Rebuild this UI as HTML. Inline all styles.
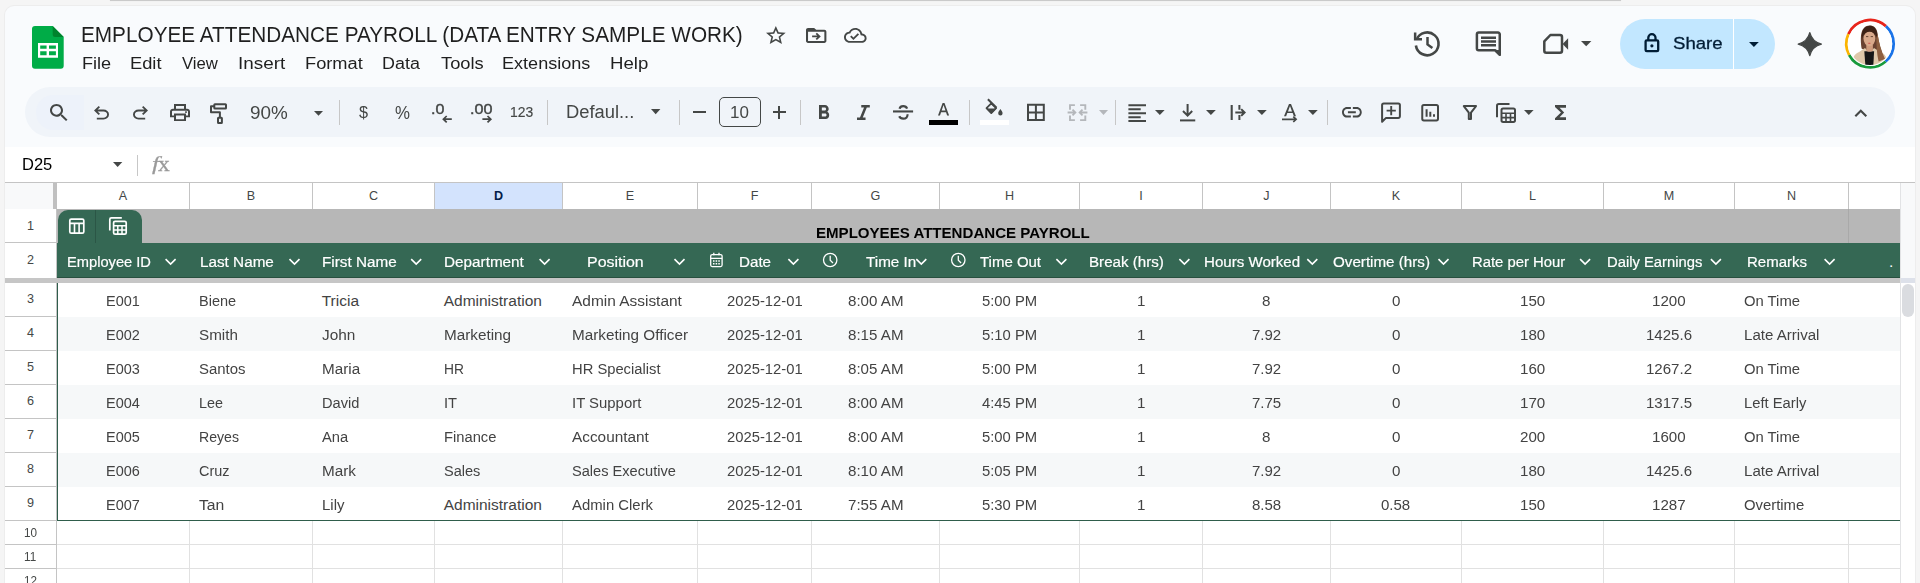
<!DOCTYPE html>
<html lang="en"><head><meta charset="utf-8"><title>EMPLOYEE ATTENDANCE PAYROLL (DATA ENTRY SAMPLE WORK) - Google Sheets</title>
<style>
html,body{margin:0;padding:0}
body{width:1920px;height:583px;overflow:hidden;position:relative;background:#f5f5f5;font-family:'Liberation Sans', sans-serif;}
body div, body svg, body span.t, body section, body header, body nav, body main{position:absolute}
span.t{white-space:nowrap;transform-origin:0 50%;display:block}
svg{overflow:visible;display:block}
</style></head>
<body>
<div style="left:110px;top:0;width:1511px;height:1px;background:#cacaca;box-shadow:0 0 1px #d8d8d8"></div>
<div id="app" style="left:5px;top:6px;width:1910px;height:600px;background:#f9fbfd;border-radius:9px 9px 0 0;box-shadow:0 0 0 1px #ededed"></div>
<header id="docs-titlebar" class="layer">
<svg style="left:31px;top:25px;" width="34" height="45" viewBox="31 25 34 45">
<path d="M35 26 h17.7 l11 11 v28.7 a3 3 0 0 1 -3 3 h-25.7 a3 3 0 0 1 -3 -3 v-36.7 a3 3 0 0 1 3 -3z" fill="#00ac47"/>
<path d="M52.7 26 l11 11 h-8.5 a2.5 2.5 0 0 1 -2.5 -2.5z" fill="#00832d"/>
<path d="M38 43 h20 v14.8 h-20z M40.2 45.4 v3.4 h6.4 v-3.4z M49 45.4 v3.4 h6.9 v-3.4z M40.2 51.2 v4.1 h6.4 v-4.1z M49 51.2 v4.1 h6.9 v-4.1z" fill="#fff" fill-rule="evenodd"/>
</svg>
<span class="t" style="left:80.84px;top:22px;font-size:22.3px;line-height:25px;color:#1f1f1f;transform:scaleX(0.9305);">EMPLOYEE ATTENDANCE PAYROLL (DATA ENTRY SAMPLE WORK)</span>
<svg style="left:765.6px;top:26px;" width="19.7" height="18" viewBox="2 2 20 19" preserveAspectRatio="none"><path fill="#444746" d="M22 9.24l-7.19-.62L12 2 9.19 8.63 2 9.24l5.46 4.73L5.82 21 12 17.27 18.18 21l-1.63-7.03L22 9.24zM12 15.4l-3.76 2.27 1-4.28-3.32-2.88 4.38-.38L12 6.1l1.71 4.04 4.38.38-3.32 2.88 1 4.28L12 15.4z"/></svg>
<svg style="left:805.6px;top:27.9px;" width="20.4" height="14.9" viewBox="2 4 20 16" preserveAspectRatio="none"><path fill="#444746" d="M20 6h-8l-2-2H4c-1.1 0-2 .9-2 2v12c0 1.1.9 2 2 2h16c1.1 0 2-.9 2-2V8c0-1.1-.9-2-2-2zm0 12H4V8h16v10zm-7.3-1.2l3.8-3.8-3.8-3.8-1.25 1.25 1.65 1.65H8v1.8h5.1l-1.65 1.65z"/></svg>
<svg style="left:844.4px;top:27.5px;" width="22.6" height="14.8" viewBox="0 4 24 16" preserveAspectRatio="none"><path fill="#444746" d="M19.35 10.04C18.67 6.59 15.64 4 12 4 9.11 4 6.6 5.64 5.35 8.04 2.34 8.36 0 10.91 0 14c0 3.31 2.69 6 6 6h13c2.76 0 5-2.24 5-5 0-2.64-2.05-4.78-4.65-4.96zM19 18H6c-2.21 0-4-1.79-4-4 0-2.05 1.53-3.76 3.56-3.97l1.07-.11.5-.95C8.08 7.14 9.94 6 12 6c2.62 0 4.88 1.86 5.39 4.43l.3 1.5 1.53.11c1.56.1 2.78 1.41 2.78 2.96 0 1.65-1.35 3-3 3zm-9-3.82l-2.09-2.09L6.5 13.5 10 17l6.01-6.01-1.41-1.41z"/></svg>
<nav id="docs-menubar" class="layer">
<span class="t" style="left:81.55px;top:53px;font-size:17.3px;line-height:20px;color:#1f1f1f;transform:scaleX(1.0480);">File</span>
<span class="t" style="left:129.54px;top:53px;font-size:17.3px;line-height:20px;color:#1f1f1f;transform:scaleX(1.0583);">Edit</span>
<span class="t" style="left:182px;top:53px;font-size:17.3px;line-height:20px;color:#1f1f1f;transform:scaleX(0.9676);">View</span>
<span class="t" style="left:238.05px;top:53px;font-size:17.3px;line-height:20px;color:#1f1f1f;transform:scaleX(1.0930);">Insert</span>
<span class="t" style="left:305.04px;top:53px;font-size:17.3px;line-height:20px;color:#1f1f1f;transform:scaleX(1.0553);">Format</span>
<span class="t" style="left:382.31px;top:53px;font-size:17.3px;line-height:20px;color:#1f1f1f;transform:scaleX(1.0370);">Data</span>
<span class="t" style="left:440.88px;top:53px;font-size:17.3px;line-height:20px;color:#1f1f1f;transform:scaleX(1.0599);">Tools</span>
<span class="t" style="left:502.3px;top:53px;font-size:17.3px;line-height:20px;color:#1f1f1f;transform:scaleX(1.0447);">Extensions</span>
<span class="t" style="left:609.51px;top:53px;font-size:17.3px;line-height:20px;color:#1f1f1f;transform:scaleX(1.0762);">Help</span>
</nav>
<svg style="left:1410px;top:28px;" width="32" height="32" viewBox="1410 28 32 32">
<path d="M1416.6 39.6 A11.4 11.4 0 1 1 1415.9 45.5" fill="none" stroke="#444746" stroke-width="2.6"/>
<path d="M1413.9 32.6 h2.5 v5.4 h5.6 v2.5 h-8.1z" fill="#444746"/>
<path d="M1427.500 37 v7.400 l4.900 3.600" fill="none" stroke="#444746" stroke-width="2.5"/>
</svg>
<svg style="left:1474px;top:30px;" width="30" height="28" viewBox="1474 30 30 28">
<path d="M1478.6 32.5 h19.4 a1.75 1.75 0 0 1 1.75 1.75 v20.6 l-4.6 -4.6 h-16.5 a1.75 1.75 0 0 1 -1.75 -1.75 v-14.25 a1.75 1.75 0 0 1 1.75 -1.75z" fill="none" stroke="#444746" stroke-width="2.5" stroke-linejoin="round"/>
<path d="M1495.2 50 l5.8 0 v6z" fill="#444746"/>
<path d="M1481 36.4h15v2.5h-15z M1481 40.2h15v2.5h-15z M1481 44h15v2.5h-15z" fill="#444746"/>
</svg>
<svg style="left:1541px;top:32px;" width="30" height="24" viewBox="1541 32 30 24">
<path d="M1550.4 35 h9.6 a2 2 0 0 1 2 2 v13.8 a2 2 0 0 1 -2 2 h-13.7 a2 2 0 0 1 -2 -2 v-9.4z" fill="none" stroke="#444746" stroke-width="2.5" stroke-linejoin="round"/>
<path d="M1562.6 43.9 l5.5 -5.6 v11.4z" fill="#444746"/>
</svg>
<svg style="left:1580.6px;top:40.8px;" width="10.4" height="5.2" viewBox="7 10 10 5" preserveAspectRatio="none"><path fill="#444746" d="M7 10l5 5 5-5z"/></svg>
<div id="share" style="left:1620px;top:19px;width:155px;height:50px;border-radius:25px;background:#c2e7ff"></div>
<div style="left:1733px;top:19px;width:1.3px;height:50px;background:#fff;"></div>
<svg style="left:1642px;top:31px;" width="20" height="23" viewBox="1642 31 20 23">
<rect x="1645.6" y="40.3" width="12.6" height="10.9" rx="1.2" fill="none" stroke="#001d35" stroke-width="2.3"/>
<path d="M1648.3 40.300 v-2.500 a3.600 3.600 0 0 1 7.200 0 v2.500" fill="none" stroke="#001d35" stroke-width="2.3"/>
<circle cx="1651.900" cy="45.800" r="1.600" fill="#001d35"/>
</svg>
<span class="t" style="left:1673.16px;top:34px;font-size:16.8px;line-height:19px;color:#001d35;transform:scaleX(1.1077);-webkit-text-stroke:0.3px #001d35;">Share</span>
<svg style="left:1749px;top:42px;" width="9.8" height="5" viewBox="7 10 10 5" preserveAspectRatio="none"><path fill="#001d35" d="M7 10l5 5 5-5z"/></svg>
<svg style="left:1796px;top:31px;" width="28" height="27" viewBox="1796 31 28 27"><path d="M1809.8 32.700 C1811.300 38.700 1815.300 42.600 1821.400 44.100 C1815.300 45.600 1811.300 49.500 1809.800 55.600 C1808.300 49.500 1804.300 45.600 1798.200 44.100 C1804.300 42.600 1808.300 38.700 1809.800 32.700z" fill="#444746" stroke="#444746" stroke-width="1.300" stroke-linejoin="round"/></svg>
<svg style="left:1844px;top:18px;" width="52" height="52" viewBox="1844 18 52 52">
<path d="M1885.820 26.120 A23.650 23.650 0 0 1 1885.520 61.550" fill="none" stroke="#1a73e8" stroke-width="2.800"/>
<path d="M1848.400 34.080 A23.650 23.650 0 0 1 1885.820 26.120" fill="none" stroke="#e8251b" stroke-width="2.800"/>
<path d="M1849.210 54.980 A23.650 23.650 0 0 1 1848.400 34.080" fill="none" stroke="#fbb400" stroke-width="2.800"/>
<path d="M1885.520 61.550 A23.650 23.650 0 0 1 1849.210 54.980" fill="none" stroke="#189a3c" stroke-width="2.800"/>
<circle cx="1870" cy="43.700" r="22.200" fill="#fff"/>
<clipPath id="avc"><circle cx="1870" cy="43.700" r="21.300"/></clipPath>
<filter id="avb" x="-10%" y="-10%" width="120%" height="120%"><feGaussianBlur stdDeviation="0.350"/></filter>
<g clip-path="url(#avc)" filter="url(#avb)">
<path d="M1861.600 48.500 C1860.600 42 1860.300 34 1862.600 29.800 C1864.400 26.400 1867.300 25.500 1869.800 25.500 C1873.500 25.500 1876.800 27.800 1877.600 33.500 C1878.300 40 1880.500 50 1884.600 59.500 L1879 62.500 L1875 50 L1864 50z" fill="#6b4330"/>
<path d="M1862 40 C1860.800 32 1863.500 26.200 1869.800 25.800 C1875.500 26 1878 31 1877.300 40 C1876 33 1873 30.300 1869.600 30.300 C1866 30.300 1863 33 1862 40z" fill="#3a2118"/>
<path d="M1852.500 66 C1852.300 57 1854 54.300 1859.500 51.800 L1865 48 L1869.600 53 L1874 48 L1879.500 51.500 C1885.500 54 1887.300 57 1887.300 66z" fill="#dfc8aa"/>
<path d="M1864.300 51.300 L1874.100 51.300 L1873.300 66 L1865.400 66z" fill="#171717"/>
<path d="M1866.300 45 h6.600 v5.700 c-1.600 1.300 -5 1.300 -6.600 0z" fill="#cf9c7e"/>
<ellipse cx="1869.400" cy="38.600" rx="5.900" ry="7.600" fill="#d9a98b"/>
<path d="M1863.500 36.500 C1863.600 31 1866.300 29.300 1869.600 29.300 C1873 29.300 1875.500 31 1875.500 36.500 C1874.500 33.300 1872.500 31.800 1869.600 31.800 C1866.600 31.800 1864.500 33.300 1863.500 36.500z" fill="#3f2418"/>
<path d="M1867.600 43 q1.700 -0.600 3.400 0 q-1.700 1.500 -3.400 0z" fill="#cf4648"/>
<path d="M1866 36.600 h2.300 M1870.700 36.600 h2.300" stroke="#5a3a2c" stroke-width="0.900" fill="none"/>
<path d="M1876.300 38 C1876.600 46 1876.800 54 1878.600 61.500 L1885 59 C1881 50 1878.800 42 1877.600 34z" fill="#8e5f40"/>
</g>
</svg>
</header>
<div id="toolbar-layer" class="layer" role="toolbar">
<div id="docs-toolbar" style="left:25px;top:87px;width:1870px;height:50px;border-radius:25px;background:#f0f4f9"></div>
<div style="left:36px;top:95px;width:48px;height:35px;border-radius:17px 0 0 17px;background:#edf2fa"></div>
<svg style="left:49.8px;top:103.9px;" width="17.5" height="17.1" viewBox="3 3 17.49 17.49" preserveAspectRatio="none"><path fill="#444746" d="M15.5 14h-.79l-.28-.27C15.41 12.59 16 11.11 16 9.5 16 5.91 13.09 3 9.5 3S3 5.91 3 9.5 5.91 16 9.5 16c1.61 0 3.09-.59 4.23-1.57l.27.28v.79l5 4.99L20.49 19l-4.99-5zm-6 0C7.010 14 5 11.99 5 9.500S7.010 5 9.500 5 14 7.010 14 9.500 11.990 14 9.500 14z"/></svg>
<svg style="left:94px;top:106.4px;" width="15" height="13.5" viewBox="4 4 16 15" preserveAspectRatio="none"><path fill="#444746" d="M7 19v-2h7.1q1.575 0 2.738-1T18 13.5 16.838 11 14.100 10H7.800l2.600 2.600L9 14 4 9l5-5 1.400 1.400L7.800 8h6.300q2.425 0 4.163 1.575T20 13.500t-1.737 3.925T14.100 19z"/></svg>
<svg style="left:133px;top:106.4px;transform:scaleX(-1);" width="15" height="13.5" viewBox="4 4 16 15" preserveAspectRatio="none"><path fill="#444746" d="M7 19v-2h7.1q1.575 0 2.738-1T18 13.5 16.838 11 14.100 10H7.800l2.600 2.600L9 14 4 9l5-5 1.400 1.400L7.800 8h6.300q2.425 0 4.163 1.575T20 13.500t-1.737 3.925T14.100 19z"/></svg>
<svg style="left:170px;top:103.9px;" width="20" height="17.1" viewBox="2 3 20 18" preserveAspectRatio="none"><path fill="#444746" d="M16 8V5H8v3H6V3h12v5ZM4 10h16H6Zm14 2.5q.425 0 .713-.287T19 11.500t-.287-.712T18 10.500t-.712.288T17 11.500t.288.713.712.287ZM16 19v-4H8v4Zm2 2H6v-4H2v-6q0-1.275.875-2.137T5 8h14q1.275 0 2.138.863T22 11v6h-4Zm2-6v-4q0-.425-.287-.712T19 10H5q-.425 0-.712.288T4 11v4h2v-2h12v2Z"/></svg>
<svg style="left:208px;top:102px;" width="21" height="24" viewBox="208 102 21 24">
<rect x="214.3" y="104.2" width="11.7" height="4.3" rx="0.6" fill="none" stroke="#444746" stroke-width="2"/>
<path d="M214.3 106.3 h-3.3 v6 h8.9 v4.6" fill="none" stroke="#444746" stroke-width="2" stroke-linejoin="round"/>
<rect x="218" y="117.8" width="3.9" height="5.2" rx="0.5" fill="none" stroke="#444746" stroke-width="2"/>
</svg>
<span class="t" style="left:249.75px;top:103px;font-size:17.8px;line-height:20px;color:#444746;transform:scaleX(1.0619);">90%</span>
<svg style="left:313.75px;top:110.75px;" width="9" height="4.75" viewBox="7 10 10 5" preserveAspectRatio="none"><path fill="#444746" d="M7 10l5 5 5-5z"/></svg>
<div style="left:339px;top:100px;width:1px;height:25px;background:#c7c7c7;"></div>
<span class="t" style="left:358.74px;top:103px;font-size:17px;line-height:19px;color:#444746;transform:scaleX(0.9551);">$</span>
<span class="t" style="left:395.01px;top:103px;font-size:17.5px;line-height:20px;color:#444746;transform:scaleX(0.9615);">%</span>
<span class="t" style="left:430.75px;top:100px;font-size:15.4px;line-height:17px;color:#444746;transform:scaleX(1.0458);-webkit-text-stroke:0.45px #444746;">.0</span>
<svg style="left:441px;top:116px;" width="12" height="8" viewBox="441 116 12 8"><path d="M451.800 119.200 h-8.400 m3.300 -3.200 l-3.300 3.200 l3.300 3.200" fill="none" stroke="#444746" stroke-width="1.7"/></svg>
<span class="t" style="left:469.84px;top:100px;font-size:15.4px;line-height:17px;color:#444746;transform:scaleX(1.0533);-webkit-text-stroke:0.45px #444746;">.00</span>
<svg style="left:480px;top:116px;" width="12" height="8" viewBox="480 116 12 8"><path d="M482.400 119.200 h8.400 m-3.300 -3.200 l3.300 3.200 l-3.300 3.200" fill="none" stroke="#444746" stroke-width="1.7"/></svg>
<span class="t" style="left:510.36px;top:104px;font-size:14.6px;line-height:16px;color:#444746;transform:scaleX(0.9531);-webkit-text-stroke:0.15px #444746;">123</span>
<div style="left:547px;top:100px;width:1px;height:25px;background:#c7c7c7;"></div>
<span class="t" style="left:566.03px;top:102px;font-size:18px;line-height:20px;color:#444746;transform:scaleX(1.0191);">Defaul...</span>
<svg style="left:650.6px;top:108.6px;" width="9.4" height="5.3" viewBox="7 10 10 5" preserveAspectRatio="none"><path fill="#444746" d="M7 10l5 5 5-5z"/></svg>
<div style="left:679px;top:100px;width:1px;height:25px;background:#c7c7c7;"></div>
<div style="left:693px;top:111px;width:13px;height:2.2px;background:#444746;"></div>
<div style="left:719px;top:97px;width:40px;height:28px;border:1.2px solid #444746;border-radius:5px"></div>
<span class="t" style="left:729.53px;top:102px;font-size:17.2px;line-height:20px;color:#444746;transform:scaleX(0.9876);">10</span>
<div style="left:772.5px;top:111.3px;width:13.2px;height:2.2px;background:#444746;"></div>
<div style="left:778px;top:105.8px;width:2.2px;height:13.2px;background:#444746;"></div>
<div style="left:800px;top:100px;width:1px;height:25px;background:#c7c7c7;"></div>
<svg style="left:819px;top:105px;" width="10.2" height="14" viewBox="7 4 10.75 14" preserveAspectRatio="none"><path fill="#444746" d="M15.6 10.79c.97-.67 1.65-1.77 1.65-2.79 0-2.26-1.75-4-4-4H7v14h7.04c2.09 0 3.71-1.7 3.71-3.79 0-1.52-.86-2.82-2.15-3.42zM10 6.5h3c.83 0 1.5.67 1.5 1.5s-.67 1.500-1.500 1.500h-3v-3zm3.500 9H10v-3h3.500c.830 0 1.500.670 1.500 1.500s-.670 1.500-1.500 1.500z"/></svg>
<svg style="left:857.1px;top:105.2px;" width="12.8" height="15" viewBox="6 4 12 16" preserveAspectRatio="none"><path fill="#444746" d="M10 4 H18 V6.7 H15.2 L11.4 17.3 H14 V20 H6 V17.3 H8.8 L12.6 6.7 H10z"/></svg>
<svg style="left:892px;top:103px;" width="22" height="18" viewBox="892 103 22 18">
<path d="M893 110.400 h20.100 v2.100 h-20.100z" fill="#444746"/>
<path d="M899.600 108.700 C900 106.900 901.400 106.100 903.200 106.100 C905 106.100 906.500 106.900 907.100 108.600" fill="none" stroke="#444746" stroke-width="2.200"/>
<path d="M907.400 114.300 C908 117 906 118.700 903.300 118.700 C901.300 118.700 899.900 117.900 899.200 116.300" fill="none" stroke="#444746" stroke-width="2.200"/>
</svg>
<svg style="left:937.9px;top:103.3px;" width="11.1" height="12.5" viewBox="5.5 4 13 14" preserveAspectRatio="none"><path fill="#444746" d="M5.5 18 L10.9 4 h2.2 L18.5 18 h-2.3 l-1.3 -3.7 H9.1 L7.8 18z M9.8 12.4 h4.4 L12 6.3z"/></svg>
<div style="left:928.75px;top:120px;width:29.3px;height:5px;background:#000;"></div>
<div style="left:969px;top:100px;width:1px;height:25px;background:#c7c7c7;"></div>
<svg style="left:984px;top:97px;" width="22" height="20" viewBox="984 97 22 20">
<path d="M987.900 99.200 l8.600 8.600" fill="none" stroke="#444746" stroke-width="2"/>
<path d="M991.300 103.400 l4.800 4.800 l-4.800 4.800 l-4.800 -4.800z" fill="none" stroke="#444746" stroke-width="1.800" stroke-linejoin="round"/>
<path d="M986 108.500 h10.600 l-5.300 5.300z" fill="#444746"/>
<path d="M1000.400 109 c1.200 1.700 2.200 3 2.200 4.300 a2.200 2.200 0 0 1 -4.400 0 c0 -1.300 1 -2.600 2.200 -4.300z" fill="#444746"/>
</svg>
<div style="left:980px;top:120px;width:29px;height:5px;background:#fff;"></div>
<svg style="left:1026px;top:103px;" width="20" height="19" viewBox="1026 103 20 19"><path d="M1028 104.850 h15.800 v15.150 h-15.800z M1035.900 104.850 v15.150 M1028 112.400 h15.800" fill="none" stroke="#444746" stroke-width="2"/></svg>
<svg style="left:1066px;top:103px;" width="23" height="19" viewBox="1066 103 23 19">
<path d="M1074.900 105.100 h-4.900 v4.600 M1074.900 120.100 h-4.900 v-4.600 M1080.100 105.100 h5.200 v4.600 M1080.100 120.100 h5.200 v-4.600" fill="none" stroke="#b4b7bb" stroke-width="1.900"/>
<path d="M1067.600 112.500 h7.700 m-2.800 -2.900 l2.900 2.900 l-2.900 2.900 M1087.400 112.500 h-7.700 m2.800 -2.900 l-2.900 2.900 l2.900 2.900" fill="none" stroke="#b4b7bb" stroke-width="1.800"/>
</svg>
<svg style="left:1098.75px;top:109.75px;" width="9" height="5" viewBox="7 10 10 5" preserveAspectRatio="none"><path fill="#b4b7bb" d="M7 10l5 5 5-5z"/></svg>
<div style="left:1115px;top:100px;width:1px;height:25px;background:#c7c7c7;"></div>
<svg style="left:1128px;top:104px;" width="19" height="18" viewBox="1128 104 19 18"><path d="M1128.400 104.300h17.600v2h-17.600z M1128.400 108.250h12.300v2h-12.300z M1128.400 112.200h17.600v2h-17.600z M1128.400 116.150h12.300v2h-12.300z M1128.400 120h17.600v2h-17.600z" fill="#444746"/></svg>
<svg style="left:1154.75px;top:109.75px;" width="9.65" height="5" viewBox="7 10 10 5" preserveAspectRatio="none"><path fill="#444746" d="M7 10l5 5 5-5z"/></svg>
<svg style="left:1179px;top:103px;" width="18" height="19" viewBox="1179 103 18 19"><path d="M1180 119.400 h15.250 v2 h-15.250z" fill="#444746"/><path d="M1187.600 104 v11.500 m-4.600 -4.500 l4.600 4.600 l4.600 -4.600" fill="none" stroke="#444746" stroke-width="2"/></svg>
<svg style="left:1205.6px;top:109.75px;" width="9.8" height="5" viewBox="7 10 10 5" preserveAspectRatio="none"><path fill="#444746" d="M7 10l5 5 5-5z"/></svg>
<svg style="left:1230px;top:104px;" width="17" height="17" viewBox="1230 104 17 17"><path d="M1231.700 105 v15" fill="none" stroke="#444746" stroke-width="2.100"/><path d="M1239.400 104.900 v4.800 M1239.400 115.100 v4.800" fill="none" stroke="#444746" stroke-width="2"/><path d="M1235.300 112.500 h9.200 m-3.300 -3.400 l3.400 3.400 l-3.400 3.400" fill="none" stroke="#444746" stroke-width="2"/></svg>
<svg style="left:1256.5px;top:109.75px;" width="9.75" height="5" viewBox="7 10 10 5" preserveAspectRatio="none"><path fill="#444746" d="M7 10l5 5 5-5z"/></svg>
<svg style="left:1283.5px;top:104px;" width="12" height="12.3" viewBox="5.5 4 13 14" preserveAspectRatio="none"><path fill="#444746" d="M5.5 18 L10.9 4 h2.2 L18.5 18 h-2.3 l-1.3 -3.7 H9.1 L7.8 18z M9.8 12.4 h4.4 L12 6.3z"/></svg>
<svg style="left:1281px;top:116px;" width="18" height="7" viewBox="1281 116 18 7"><path d="M1282 119.300 h14 m-2.700 -2.700 l2.800 2.700 l-2.800 2.700" fill="none" stroke="#444746" stroke-width="1.700"/></svg>
<svg style="left:1307.5px;top:109.75px;" width="9.75" height="5" viewBox="7 10 10 5" preserveAspectRatio="none"><path fill="#444746" d="M7 10l5 5 5-5z"/></svg>
<div style="left:1327px;top:100px;width:1px;height:25px;background:#c7c7c7;"></div>
<svg style="left:1341.5px;top:107px;" width="19.75" height="10.6" viewBox="2 7 20 10" preserveAspectRatio="none"><path fill="#444746" d="M3.9 12c0-1.71 1.39-3.1 3.1-3.1h4V7H7c-2.76 0-5 2.24-5 5s2.240 5 5 5h4v-1.900H7c-1.710 0-3.100-1.390-3.100-3.100zM8 13h8v-2H8v2zm9-6h-4v1.900h4c1.710 0 3.100 1.390 3.100 3.100s-1.390 3.100-3.100 3.100h-4V17h4c2.760 0 5-2.240 5-5s-2.240-5-5-5z"/></svg>
<svg style="left:1380px;top:101px;" width="23" height="23" viewBox="1380 101 23 23">
<path d="M1383.700 103.500 h14.600 a1.600 1.600 0 0 1 1.600 1.600 v11.200 a1.600 1.600 0 0 1 -1.600 1.600 h-12.300 l-3.900 3.900 v-16.700 a1.600 1.600 0 0 1 1.600 -1.600z" fill="none" stroke="#444746" stroke-width="2" stroke-linejoin="round"/>
<path d="M1386.600 109.700 h9.200 v1.900 h-9.200z M1390.250 106 h1.900 v9.200 h-1.900z" fill="#444746"/>
</svg>
<svg style="left:1420px;top:103px;" width="20" height="19" viewBox="1420 103 20 19">
<rect x="1422.250" y="104.900" width="15.750" height="15.500" rx="1.600" fill="none" stroke="#444746" stroke-width="2"/>
<path d="M1425.600 109.300 h2 v7.500 h-2z M1429.300 111.800 h2 v5 h-2z M1433 114.300 h2 v2.500 h-2z" fill="#444746"/>
</svg>
<svg style="left:1462px;top:104px;" width="16" height="17" viewBox="1462 104 16 17"><path d="M1463.800 106.100 h12.200 l-5 6.500 v6.400 h-2.200 v-6.400z" fill="none" stroke="#444746" stroke-width="2" stroke-linejoin="round"/></svg>
<svg style="left:1495px;top:102px;" width="22" height="22" viewBox="1495 102 22 22">
<path d="M1497 117.300 v-11.500 a1.800 1.800 0 0 1 1.800 -1.800 h10.700" fill="none" stroke="#444746" stroke-width="2"/>
<rect x="1501.500" y="108.400" width="13.500" height="13.500" rx="1.600" fill="none" stroke="#444746" stroke-width="2"/>
<path d="M1501.500 113.300 h13.500 M1501.500 117.600 h13.500 M1506 113.300 v8.600 M1510.500 113.300 v8.600" fill="none" stroke="#444746" stroke-width="1.600"/>
</svg>
<svg style="left:1524.4px;top:109.75px;" width="9.6" height="5" viewBox="7 10 10 5" preserveAspectRatio="none"><path fill="#444746" d="M7 10l5 5 5-5z"/></svg>
<svg style="left:1555px;top:104.9px;" width="11" height="15" viewBox="6 4 12 16" preserveAspectRatio="none"><path fill="#444746" d="M18 4H6v2l6.500 6L6 18v2h12v-3h-7l5-5-5-5h7z"/></svg>
<svg style="left:1853px;top:108px;" width="16" height="10" viewBox="1853 108 16 10"><path d="M1855.300 116.200 l5.500 -5.500 l5.500 5.500" fill="none" stroke="#444746" stroke-width="2.100"/></svg>
</div>
<div id="formula-layer" class="layer">
<div id="formula-bar" style="left:5px;top:147px;width:1910px;height:35px;background:#fff"></div>
<span class="t" style="left:21.58px;top:155px;font-size:16.3px;line-height:18px;color:#000;transform:scaleX(1.0143);">D25</span>
<svg style="left:112.5px;top:161.8px;" width="9.3" height="5.1" viewBox="7 10 10 5" preserveAspectRatio="none"><path fill="#444746" d="M7 10l5 5 5-5z"/></svg>
<div style="left:137px;top:155px;width:1px;height:21px;background:#c7c7c7;"></div>
<span class="t" style="left:151.64px;top:153px;font-size:19.1px;line-height:21px;color:#9a9a9a;font-style:italic;font-family:'Liberation Serif', serif;transform:scaleX(1.3452);-webkit-text-stroke:0.25px #9a9a9a;">f</span>
<span class="t" style="left:157.58px;top:152px;font-size:21px;line-height:24px;color:#9a9a9a;font-family:'Liberation Serif', serif;transform:scaleX(1.1193);-webkit-text-stroke:0.3px #9a9a9a;">x</span>
</div>
<main id="grid-layer" class="layer">
<div id="grid" style="left:5px;top:182px;width:1895px;height:401px;background:#fff"></div>
<div style="left:5px;top:182px;width:1910px;height:1px;background:#c4c4c4;"></div>
<div style="left:5px;top:183px;width:48px;height:26px;background:#f8f9fa;"></div>
<div style="left:53px;top:183px;width:4px;height:26px;background:#c0c0c0;"></div>
<div style="left:435px;top:183px;width:127px;height:26px;background:#d3e3fd;"></div>
<div style="left:189px;top:183px;width:1px;height:26px;background:#c4c4c4;"></div>
<div style="left:312px;top:183px;width:1px;height:26px;background:#c4c4c4;"></div>
<div style="left:434px;top:183px;width:1px;height:26px;background:#c4c4c4;"></div>
<div style="left:562px;top:183px;width:1px;height:26px;background:#c4c4c4;"></div>
<div style="left:697px;top:183px;width:1px;height:26px;background:#c4c4c4;"></div>
<div style="left:811px;top:183px;width:1px;height:26px;background:#c4c4c4;"></div>
<div style="left:939px;top:183px;width:1px;height:26px;background:#c4c4c4;"></div>
<div style="left:1079px;top:183px;width:1px;height:26px;background:#c4c4c4;"></div>
<div style="left:1202px;top:183px;width:1px;height:26px;background:#c4c4c4;"></div>
<div style="left:1330px;top:183px;width:1px;height:26px;background:#c4c4c4;"></div>
<div style="left:1461px;top:183px;width:1px;height:26px;background:#c4c4c4;"></div>
<div style="left:1603px;top:183px;width:1px;height:26px;background:#c4c4c4;"></div>
<div style="left:1734px;top:183px;width:1px;height:26px;background:#c4c4c4;"></div>
<div style="left:1848px;top:183px;width:1px;height:26px;background:#c4c4c4;"></div>
<div style="left:1900px;top:183px;width:1px;height:26px;background:#c4c4c4;"></div>
<div style="left:57px;top:208.6px;width:1843px;height:0.8px;background:#c4c4c4;"></div>
<span class="t" style="left:118.8px;top:189px;font-size:12.6px;line-height:14px;color:#444746;">A</span>
<span class="t" style="left:246.8px;top:189px;font-size:12.6px;line-height:14px;color:#444746;">B</span>
<span class="t" style="left:368.95px;top:189px;font-size:12.6px;line-height:14px;color:#444746;">C</span>
<span class="t" style="left:493.95px;top:189px;font-size:12.6px;line-height:14px;color:#041e49;font-weight:bold;">D</span>
<span class="t" style="left:625.8px;top:189px;font-size:12.6px;line-height:14px;color:#444746;">E</span>
<span class="t" style="left:750.65px;top:189px;font-size:12.6px;line-height:14px;color:#444746;">F</span>
<span class="t" style="left:870.6px;top:189px;font-size:12.6px;line-height:14px;color:#444746;">G</span>
<span class="t" style="left:1004.95px;top:189px;font-size:12.6px;line-height:14px;color:#444746;">H</span>
<span class="t" style="left:1139.25px;top:189px;font-size:12.6px;line-height:14px;color:#444746;">I</span>
<span class="t" style="left:1263.35px;top:189px;font-size:12.6px;line-height:14px;color:#444746;">J</span>
<span class="t" style="left:1391.8px;top:189px;font-size:12.6px;line-height:14px;color:#444746;">K</span>
<span class="t" style="left:1528.99px;top:189px;font-size:12.6px;line-height:14px;color:#444746;">L</span>
<span class="t" style="left:1663.75px;top:189px;font-size:12.6px;line-height:14px;color:#444746;">M</span>
<span class="t" style="left:1786.95px;top:189px;font-size:12.6px;line-height:14px;color:#444746;">N</span>
<div style="left:56px;top:209px;width:1px;height:374px;background:#c4c4c4;"></div>
<span class="t" style="left:26.99px;top:219px;font-size:12.6px;line-height:14px;color:#444746;">1</span>
<div style="left:5px;top:242px;width:51px;height:1px;background:#c4c4c4;"></div>
<span class="t" style="left:26.99px;top:253px;font-size:12.6px;line-height:14px;color:#444746;">2</span>
<span class="t" style="left:26.99px;top:292px;font-size:12.6px;line-height:14px;color:#444746;">3</span>
<div style="left:5px;top:316px;width:51px;height:1px;background:#c4c4c4;"></div>
<span class="t" style="left:26.99px;top:326px;font-size:12.6px;line-height:14px;color:#444746;">4</span>
<div style="left:5px;top:350px;width:51px;height:1px;background:#c4c4c4;"></div>
<span class="t" style="left:26.99px;top:360px;font-size:12.6px;line-height:14px;color:#444746;">5</span>
<div style="left:5px;top:384px;width:51px;height:1px;background:#c4c4c4;"></div>
<span class="t" style="left:26.99px;top:394px;font-size:12.6px;line-height:14px;color:#444746;">6</span>
<div style="left:5px;top:418px;width:51px;height:1px;background:#c4c4c4;"></div>
<span class="t" style="left:26.99px;top:428px;font-size:12.6px;line-height:14px;color:#444746;">7</span>
<div style="left:5px;top:452px;width:51px;height:1px;background:#c4c4c4;"></div>
<span class="t" style="left:26.99px;top:462px;font-size:12.6px;line-height:14px;color:#444746;">8</span>
<div style="left:5px;top:486px;width:51px;height:1px;background:#c4c4c4;"></div>
<span class="t" style="left:26.99px;top:496px;font-size:12.6px;line-height:14px;color:#444746;">9</span>
<div style="left:5px;top:520px;width:51px;height:1px;background:#c4c4c4;"></div>
<span class="t" style="left:23.98px;top:526px;font-size:12.6px;line-height:14px;color:#444746;transform:scaleX(0.9300);">10</span>
<div style="left:5px;top:544px;width:51px;height:1px;background:#c4c4c4;"></div>
<span class="t" style="left:24.42px;top:550px;font-size:12.6px;line-height:14px;color:#444746;transform:scaleX(0.9300);">11</span>
<div style="left:5px;top:568px;width:51px;height:1px;background:#c4c4c4;"></div>
<span class="t" style="left:23.98px;top:574px;font-size:12.6px;line-height:14px;color:#444746;transform:scaleX(0.9300);">12</span>
<div style="left:5px;top:592px;width:51px;height:1px;background:#c4c4c4;"></div>
<div style="left:57px;top:209px;width:1843px;height:34px;background:#b7b7b7;"></div>
<div style="left:1848px;top:209px;width:1px;height:34px;background:#a9a9a9;"></div>
<span class="t" style="left:815.62px;top:224px;font-size:15px;line-height:17px;color:#000;font-weight:bold;transform:scaleX(1.0045);">EMPLOYEES ATTENDANCE PAYROLL</span>
<div style="left:58px;top:210px;width:84px;height:34px;background:#356854;border-radius:10px 10px 0 0"></div>
<div style="left:95px;top:210px;width:1px;height:33px;background:#2b5646;"></div>
<svg style="left:68px;top:217px;" width="18" height="18" viewBox="68 217 18 18">
<rect x="69.800" y="219.100" width="14" height="14.100" rx="1.500" fill="none" stroke="#fff" stroke-width="1.700"/>
<path d="M69.800 223.400 h14 M74.500 223.400 v9.800 M79.100 223.400 v9.800" fill="none" stroke="#fff" stroke-width="1.600"/>
</svg>
<svg style="left:108px;top:216px;" width="20" height="20" viewBox="108 216 20 20">
<path d="M109.800 230.500 v-11 a1.600 1.600 0 0 1 1.600 -1.600 h10.400" fill="none" stroke="#fff" stroke-width="1.700"/>
<rect x="113.600" y="221.300" width="12.600" height="12.900" rx="1.500" fill="none" stroke="#fff" stroke-width="1.700"/>
<path d="M113.600 225.800 h12.600 M113.600 230 h12.600 M117.800 225.800 v8.400 M122 225.800 v8.400" fill="none" stroke="#fff" stroke-width="1.500"/>
</svg>
<div style="left:57px;top:243px;width:1843px;height:34.5px;background:#356854;"></div>
<div style="left:57px;top:276.5px;width:1843px;height:1px;background:#28503f;"></div>
<div style="left:5px;top:277.5px;width:1895px;height:5px;background:#c6c6c6;"></div>
<div style="left:1900px;top:277.5px;width:15px;height:5px;background:#dde1ea;"></div>
<span class="t" style="left:66.63px;top:253px;font-size:15.5px;line-height:17px;color:#fff;transform:scaleX(0.9463);-webkit-text-stroke:0.2px #fff;">Employee ID</span>
<svg style="left:164px;top:257px;" width="14" height="9" viewBox="164 257 14 9"><path d="M165.6 259.100 l5 5 l5 -5" fill="none" stroke="#fff" stroke-width="1.600"/></svg>
<span class="t" style="left:199.78px;top:253px;font-size:15.5px;line-height:17px;color:#fff;transform:scaleX(0.9853);-webkit-text-stroke:0.2px #fff;">Last Name</span>
<svg style="left:287px;top:257px;" width="14" height="9" viewBox="287 257 14 9"><path d="M289.5 259.100 l5 5 l5 -5" fill="none" stroke="#fff" stroke-width="1.600"/></svg>
<span class="t" style="left:321.98px;top:253px;font-size:15.5px;line-height:17px;color:#fff;transform:scaleX(0.9849);-webkit-text-stroke:0.2px #fff;">First Name</span>
<svg style="left:409px;top:257px;" width="14" height="9" viewBox="409 257 14 9"><path d="M411.20000000000005 259.100 l5 5 l5 -5" fill="none" stroke="#fff" stroke-width="1.600"/></svg>
<span class="t" style="left:443.78px;top:253px;font-size:15.5px;line-height:17px;color:#fff;transform:scaleX(0.9862);-webkit-text-stroke:0.2px #fff;">Department</span>
<svg style="left:538px;top:257px;" width="14" height="9" viewBox="538 257 14 9"><path d="M539.6 259.100 l5 5 l5 -5" fill="none" stroke="#fff" stroke-width="1.600"/></svg>
<span class="t" style="left:587.22px;top:253px;font-size:15.5px;line-height:17px;color:#fff;transform:scaleX(1.0289);-webkit-text-stroke:0.2px #fff;">Position</span>
<svg style="left:672px;top:257px;" width="14" height="9" viewBox="672 257 14 9"><path d="M674.5 259.100 l5 5 l5 -5" fill="none" stroke="#fff" stroke-width="1.600"/></svg>
<span class="t" style="left:738.79px;top:253px;font-size:15.5px;line-height:17px;color:#fff;transform:scaleX(0.9782);-webkit-text-stroke:0.2px #fff;">Date</span>
<svg style="left:786px;top:257px;" width="14" height="9" viewBox="786 257 14 9"><path d="M788.4 259.100 l5 5 l5 -5" fill="none" stroke="#fff" stroke-width="1.600"/></svg>
<span class="t" style="left:865.7px;top:253px;font-size:15.5px;line-height:17px;color:#fff;transform:scaleX(0.9829);-webkit-text-stroke:0.2px #fff;">Time In</span>
<svg style="left:914px;top:257px;" width="14" height="9" viewBox="914 257 14 9"><path d="M916.3000000000001 259.100 l5 5 l5 -5" fill="none" stroke="#fff" stroke-width="1.600"/></svg>
<span class="t" style="left:979.7px;top:253px;font-size:15.5px;line-height:17px;color:#fff;transform:scaleX(0.9663);-webkit-text-stroke:0.2px #fff;">Time Out</span>
<svg style="left:1054px;top:257px;" width="14" height="9" viewBox="1054 257 14 9"><path d="M1056.3999999999999 259.100 l5 5 l5 -5" fill="none" stroke="#fff" stroke-width="1.600"/></svg>
<span class="t" style="left:1089.29px;top:253px;font-size:15.5px;line-height:17px;color:#fff;transform:scaleX(0.9770);-webkit-text-stroke:0.2px #fff;">Break (hrs)</span>
<svg style="left:1177px;top:257px;" width="14" height="9" viewBox="1177 257 14 9"><path d="M1179.3999999999999 259.100 l5 5 l5 -5" fill="none" stroke="#fff" stroke-width="1.600"/></svg>
<span class="t" style="left:1203.99px;top:253px;font-size:15.5px;line-height:17px;color:#fff;transform:scaleX(0.9732);-webkit-text-stroke:0.2px #fff;">Hours Worked</span>
<svg style="left:1305px;top:257px;" width="14" height="9" viewBox="1305 257 14 9"><path d="M1307.3 259.100 l5 5 l5 -5" fill="none" stroke="#fff" stroke-width="1.600"/></svg>
<span class="t" style="left:1333.22px;top:253px;font-size:15.5px;line-height:17px;color:#fff;transform:scaleX(0.9790);-webkit-text-stroke:0.2px #fff;">Overtime (hrs)</span>
<svg style="left:1436px;top:257px;" width="14" height="9" viewBox="1436 257 14 9"><path d="M1438.5 259.100 l5 5 l5 -5" fill="none" stroke="#fff" stroke-width="1.600"/></svg>
<span class="t" style="left:1471.71px;top:253px;font-size:15.5px;line-height:17px;color:#fff;transform:scaleX(0.9581);-webkit-text-stroke:0.2px #fff;">Rate per Hour</span>
<svg style="left:1578px;top:257px;" width="14" height="9" viewBox="1578 257 14 9"><path d="M1580.1 259.100 l5 5 l5 -5" fill="none" stroke="#fff" stroke-width="1.600"/></svg>
<span class="t" style="left:1606.62px;top:253px;font-size:15.5px;line-height:17px;color:#fff;transform:scaleX(0.9536);-webkit-text-stroke:0.2px #fff;">Daily Earnings</span>
<svg style="left:1709px;top:257px;" width="14" height="9" viewBox="1709 257 14 9"><path d="M1710.8999999999999 259.100 l5 5 l5 -5" fill="none" stroke="#fff" stroke-width="1.600"/></svg>
<span class="t" style="left:1746.8px;top:253px;font-size:15.5px;line-height:17px;color:#fff;transform:scaleX(0.9679);-webkit-text-stroke:0.2px #fff;">Remarks</span>
<svg style="left:1823px;top:257px;" width="14" height="9" viewBox="1823 257 14 9"><path d="M1824.6 259.100 l5 5 l5 -5" fill="none" stroke="#fff" stroke-width="1.600"/></svg>
<span class="t" style="left:1888.9px;top:253px;font-size:15.5px;line-height:17px;color:#fff;">.</span>
<svg style="left:709px;top:252px;" width="15" height="16" viewBox="709 252 15 16">
<rect x="710.700" y="254.600" width="11.400" height="12" rx="1.500" fill="none" stroke="#fff" stroke-width="1.300"/>
<path d="M710.700 258.300 h11.400 M713.800 252.700 v2.600 M719 252.700 v2.600" fill="none" stroke="#fff" stroke-width="1.300"/>
<path d="M713 260.300h1.500v1.500h-1.500z M715.650 260.300h1.500v1.500h-1.500z M718.300 260.300h1.500v1.500h-1.500z M713 263h1.500v1.500h-1.500z M715.650 263h1.500v1.500h-1.500z M718.300 263h1.500v1.500h-1.500z" fill="#fff"/>
</svg>
<svg style="left:821px;top:251px;" width="18" height="18" viewBox="821 251 18 18"><circle cx="830.2" cy="260" r="6.700" fill="none" stroke="#fff" stroke-width="1.300"/><path d="M830.2 255.800 v4.500 l2.800 2.600" fill="none" stroke="#fff" stroke-width="1.300"/></svg>
<svg style="left:949px;top:251px;" width="18" height="18" viewBox="949 251 18 18"><circle cx="958.3" cy="260" r="6.700" fill="none" stroke="#fff" stroke-width="1.300"/><path d="M958.3 255.800 v4.500 l2.800 2.600" fill="none" stroke="#fff" stroke-width="1.300"/></svg>
<span class="t" style="left:106.1px;top:292px;font-size:15.5px;line-height:17px;color:#434343;transform:scaleX(0.9335);">E001</span>
<span class="t" style="left:198.7px;top:292px;font-size:15.5px;line-height:17px;color:#434343;transform:scaleX(0.9368);">Biene</span>
<span class="t" style="left:321.7px;top:292px;font-size:15.5px;line-height:17px;color:#434343;">Tricia</span>
<span class="t" style="left:443.7px;top:292px;font-size:15.5px;line-height:17px;color:#434343;">Administration</span>
<span class="t" style="left:571.7px;top:292px;font-size:15.5px;line-height:17px;color:#434343;transform:scaleX(0.9964);">Admin Assistant</span>
<span class="t" style="left:726.74px;top:292px;font-size:15.5px;line-height:17px;color:#434343;transform:scaleX(0.9541);">2025-12-01</span>
<span class="t" style="left:847.75px;top:292px;font-size:15.5px;line-height:17px;color:#434343;transform:scaleX(0.9757);">8:00 AM</span>
<span class="t" style="left:981.91px;top:292px;font-size:15.5px;line-height:17px;color:#434343;transform:scaleX(0.9556);">5:00 PM</span>
<span class="t" style="left:1136.79px;top:292px;font-size:15.5px;line-height:17px;color:#434343;transform:scaleX(0.9766);">1</span>
<span class="t" style="left:1262.29px;top:292px;font-size:15.5px;line-height:17px;color:#434343;transform:scaleX(0.9766);">8</span>
<span class="t" style="left:1391.79px;top:292px;font-size:15.5px;line-height:17px;color:#434343;transform:scaleX(0.9766);">0</span>
<span class="t" style="left:1519.87px;top:292px;font-size:15.5px;line-height:17px;color:#434343;transform:scaleX(0.9766);">150</span>
<span class="t" style="left:1652.15px;top:292px;font-size:15.5px;line-height:17px;color:#434343;transform:scaleX(0.9770);">1200</span>
<span class="t" style="left:1743.7px;top:292px;font-size:15.5px;line-height:17px;color:#434343;transform:scaleX(0.9558);">On Time</span>
<div style="left:58px;top:317px;width:1842px;height:34px;background:#f6f8f9;"></div>
<span class="t" style="left:106.1px;top:326px;font-size:15.5px;line-height:17px;color:#434343;transform:scaleX(0.9335);">E002</span>
<span class="t" style="left:198.7px;top:326px;font-size:15.5px;line-height:17px;color:#434343;transform:scaleX(0.9804);">Smith</span>
<span class="t" style="left:321.7px;top:326px;font-size:15.5px;line-height:17px;color:#434343;transform:scaleX(0.9924);">John</span>
<span class="t" style="left:443.7px;top:326px;font-size:15.5px;line-height:17px;color:#434343;transform:scaleX(0.9860);">Marketing</span>
<span class="t" style="left:571.7px;top:326px;font-size:15.5px;line-height:17px;color:#434343;transform:scaleX(0.9858);">Marketing Officer</span>
<span class="t" style="left:726.74px;top:326px;font-size:15.5px;line-height:17px;color:#434343;transform:scaleX(0.9541);">2025-12-01</span>
<span class="t" style="left:847.75px;top:326px;font-size:15.5px;line-height:17px;color:#434343;transform:scaleX(0.9757);">8:15 AM</span>
<span class="t" style="left:981.91px;top:326px;font-size:15.5px;line-height:17px;color:#434343;transform:scaleX(0.9556);">5:10 PM</span>
<span class="t" style="left:1136.79px;top:326px;font-size:15.5px;line-height:17px;color:#434343;transform:scaleX(0.9766);">1</span>
<span class="t" style="left:1251.89px;top:326px;font-size:15.5px;line-height:17px;color:#434343;transform:scaleX(0.9683);">7.92</span>
<span class="t" style="left:1391.79px;top:326px;font-size:15.5px;line-height:17px;color:#434343;transform:scaleX(0.9766);">0</span>
<span class="t" style="left:1519.87px;top:326px;font-size:15.5px;line-height:17px;color:#434343;transform:scaleX(0.9766);">180</span>
<span class="t" style="left:1645.97px;top:326px;font-size:15.5px;line-height:17px;color:#434343;transform:scaleX(0.9713);">1425.6</span>
<span class="t" style="left:1743.7px;top:326px;font-size:15.5px;line-height:17px;color:#434343;transform:scaleX(0.9727);">Late Arrival</span>
<span class="t" style="left:106.1px;top:360px;font-size:15.5px;line-height:17px;color:#434343;transform:scaleX(0.9335);">E003</span>
<span class="t" style="left:198.7px;top:360px;font-size:15.5px;line-height:17px;color:#434343;transform:scaleX(0.9639);">Santos</span>
<span class="t" style="left:321.7px;top:360px;font-size:15.5px;line-height:17px;color:#434343;transform:scaleX(0.9836);">Maria</span>
<span class="t" style="left:443.7px;top:360px;font-size:15.5px;line-height:17px;color:#434343;transform:scaleX(0.8901);">HR</span>
<span class="t" style="left:571.7px;top:360px;font-size:15.5px;line-height:17px;color:#434343;transform:scaleX(0.9510);">HR Specialist</span>
<span class="t" style="left:726.74px;top:360px;font-size:15.5px;line-height:17px;color:#434343;transform:scaleX(0.9541);">2025-12-01</span>
<span class="t" style="left:847.75px;top:360px;font-size:15.5px;line-height:17px;color:#434343;transform:scaleX(0.9757);">8:05 AM</span>
<span class="t" style="left:981.91px;top:360px;font-size:15.5px;line-height:17px;color:#434343;transform:scaleX(0.9556);">5:00 PM</span>
<span class="t" style="left:1136.79px;top:360px;font-size:15.5px;line-height:17px;color:#434343;transform:scaleX(0.9766);">1</span>
<span class="t" style="left:1251.89px;top:360px;font-size:15.5px;line-height:17px;color:#434343;transform:scaleX(0.9683);">7.92</span>
<span class="t" style="left:1391.79px;top:360px;font-size:15.5px;line-height:17px;color:#434343;transform:scaleX(0.9766);">0</span>
<span class="t" style="left:1519.87px;top:360px;font-size:15.5px;line-height:17px;color:#434343;transform:scaleX(0.9766);">160</span>
<span class="t" style="left:1645.97px;top:360px;font-size:15.5px;line-height:17px;color:#434343;transform:scaleX(0.9713);">1267.2</span>
<span class="t" style="left:1743.7px;top:360px;font-size:15.5px;line-height:17px;color:#434343;transform:scaleX(0.9558);">On Time</span>
<div style="left:58px;top:385px;width:1842px;height:34px;background:#f6f8f9;"></div>
<span class="t" style="left:106.1px;top:394px;font-size:15.5px;line-height:17px;color:#434343;transform:scaleX(0.9335);">E004</span>
<span class="t" style="left:198.7px;top:394px;font-size:15.5px;line-height:17px;color:#434343;transform:scaleX(0.9262);">Lee</span>
<span class="t" style="left:321.7px;top:394px;font-size:15.5px;line-height:17px;color:#434343;transform:scaleX(0.9425);">David</span>
<span class="t" style="left:443.7px;top:394px;font-size:15.5px;line-height:17px;color:#434343;transform:scaleX(0.9455);">IT</span>
<span class="t" style="left:571.7px;top:394px;font-size:15.5px;line-height:17px;color:#434343;transform:scaleX(0.9609);">IT Support</span>
<span class="t" style="left:726.74px;top:394px;font-size:15.5px;line-height:17px;color:#434343;transform:scaleX(0.9541);">2025-12-01</span>
<span class="t" style="left:847.75px;top:394px;font-size:15.5px;line-height:17px;color:#434343;transform:scaleX(0.9757);">8:00 AM</span>
<span class="t" style="left:981.91px;top:394px;font-size:15.5px;line-height:17px;color:#434343;transform:scaleX(0.9556);">4:45 PM</span>
<span class="t" style="left:1136.79px;top:394px;font-size:15.5px;line-height:17px;color:#434343;transform:scaleX(0.9766);">1</span>
<span class="t" style="left:1251.89px;top:394px;font-size:15.5px;line-height:17px;color:#434343;transform:scaleX(0.9683);">7.75</span>
<span class="t" style="left:1391.79px;top:394px;font-size:15.5px;line-height:17px;color:#434343;transform:scaleX(0.9766);">0</span>
<span class="t" style="left:1519.87px;top:394px;font-size:15.5px;line-height:17px;color:#434343;transform:scaleX(0.9766);">170</span>
<span class="t" style="left:1645.97px;top:394px;font-size:15.5px;line-height:17px;color:#434343;transform:scaleX(0.9713);">1317.5</span>
<span class="t" style="left:1743.7px;top:394px;font-size:15.5px;line-height:17px;color:#434343;transform:scaleX(0.9519);">Left Early</span>
<span class="t" style="left:106.1px;top:428px;font-size:15.5px;line-height:17px;color:#434343;transform:scaleX(0.9335);">E005</span>
<span class="t" style="left:198.7px;top:428px;font-size:15.5px;line-height:17px;color:#434343;transform:scaleX(0.9095);">Reyes</span>
<span class="t" style="left:321.7px;top:428px;font-size:15.5px;line-height:17px;color:#434343;transform:scaleX(0.9502);">Ana</span>
<span class="t" style="left:443.7px;top:428px;font-size:15.5px;line-height:17px;color:#434343;transform:scaleX(0.9508);">Finance</span>
<span class="t" style="left:571.7px;top:428px;font-size:15.5px;line-height:17px;color:#434343;transform:scaleX(0.9905);">Accountant</span>
<span class="t" style="left:726.74px;top:428px;font-size:15.5px;line-height:17px;color:#434343;transform:scaleX(0.9541);">2025-12-01</span>
<span class="t" style="left:847.75px;top:428px;font-size:15.5px;line-height:17px;color:#434343;transform:scaleX(0.9757);">8:00 AM</span>
<span class="t" style="left:981.91px;top:428px;font-size:15.5px;line-height:17px;color:#434343;transform:scaleX(0.9556);">5:00 PM</span>
<span class="t" style="left:1136.79px;top:428px;font-size:15.5px;line-height:17px;color:#434343;transform:scaleX(0.9766);">1</span>
<span class="t" style="left:1262.29px;top:428px;font-size:15.5px;line-height:17px;color:#434343;transform:scaleX(0.9766);">8</span>
<span class="t" style="left:1391.79px;top:428px;font-size:15.5px;line-height:17px;color:#434343;transform:scaleX(0.9766);">0</span>
<span class="t" style="left:1519.87px;top:428px;font-size:15.5px;line-height:17px;color:#434343;transform:scaleX(0.9766);">200</span>
<span class="t" style="left:1652.15px;top:428px;font-size:15.5px;line-height:17px;color:#434343;transform:scaleX(0.9770);">1600</span>
<span class="t" style="left:1743.7px;top:428px;font-size:15.5px;line-height:17px;color:#434343;transform:scaleX(0.9558);">On Time</span>
<div style="left:58px;top:453px;width:1842px;height:34px;background:#f6f8f9;"></div>
<span class="t" style="left:106.1px;top:462px;font-size:15.5px;line-height:17px;color:#434343;transform:scaleX(0.9335);">E006</span>
<span class="t" style="left:198.7px;top:462px;font-size:15.5px;line-height:17px;color:#434343;transform:scaleX(0.9330);">Cruz</span>
<span class="t" style="left:321.7px;top:462px;font-size:15.5px;line-height:17px;color:#434343;transform:scaleX(0.9849);">Mark</span>
<span class="t" style="left:443.7px;top:462px;font-size:15.5px;line-height:17px;color:#434343;transform:scaleX(0.9381);">Sales</span>
<span class="t" style="left:571.7px;top:462px;font-size:15.5px;line-height:17px;color:#434343;transform:scaleX(0.9419);">Sales Executive</span>
<span class="t" style="left:726.74px;top:462px;font-size:15.5px;line-height:17px;color:#434343;transform:scaleX(0.9541);">2025-12-01</span>
<span class="t" style="left:847.75px;top:462px;font-size:15.5px;line-height:17px;color:#434343;transform:scaleX(0.9757);">8:10 AM</span>
<span class="t" style="left:981.91px;top:462px;font-size:15.5px;line-height:17px;color:#434343;transform:scaleX(0.9556);">5:05 PM</span>
<span class="t" style="left:1136.79px;top:462px;font-size:15.5px;line-height:17px;color:#434343;transform:scaleX(0.9766);">1</span>
<span class="t" style="left:1251.89px;top:462px;font-size:15.5px;line-height:17px;color:#434343;transform:scaleX(0.9683);">7.92</span>
<span class="t" style="left:1391.79px;top:462px;font-size:15.5px;line-height:17px;color:#434343;transform:scaleX(0.9766);">0</span>
<span class="t" style="left:1519.87px;top:462px;font-size:15.5px;line-height:17px;color:#434343;transform:scaleX(0.9766);">180</span>
<span class="t" style="left:1645.97px;top:462px;font-size:15.5px;line-height:17px;color:#434343;transform:scaleX(0.9713);">1425.6</span>
<span class="t" style="left:1743.7px;top:462px;font-size:15.5px;line-height:17px;color:#434343;transform:scaleX(0.9727);">Late Arrival</span>
<span class="t" style="left:106.1px;top:496px;font-size:15.5px;line-height:17px;color:#434343;transform:scaleX(0.9335);">E007</span>
<span class="t" style="left:198.7px;top:496px;font-size:15.5px;line-height:17px;color:#434343;transform:scaleX(1.0154);">Tan</span>
<span class="t" style="left:321.7px;top:496px;font-size:15.5px;line-height:17px;color:#434343;transform:scaleX(0.9649);">Lily</span>
<span class="t" style="left:443.7px;top:496px;font-size:15.5px;line-height:17px;color:#434343;">Administration</span>
<span class="t" style="left:571.7px;top:496px;font-size:15.5px;line-height:17px;color:#434343;transform:scaleX(0.9601);">Admin Clerk</span>
<span class="t" style="left:726.74px;top:496px;font-size:15.5px;line-height:17px;color:#434343;transform:scaleX(0.9541);">2025-12-01</span>
<span class="t" style="left:847.75px;top:496px;font-size:15.5px;line-height:17px;color:#434343;transform:scaleX(0.9757);">7:55 AM</span>
<span class="t" style="left:981.91px;top:496px;font-size:15.5px;line-height:17px;color:#434343;transform:scaleX(0.9556);">5:30 PM</span>
<span class="t" style="left:1136.79px;top:496px;font-size:15.5px;line-height:17px;color:#434343;transform:scaleX(0.9766);">1</span>
<span class="t" style="left:1251.89px;top:496px;font-size:15.5px;line-height:17px;color:#434343;transform:scaleX(0.9683);">8.58</span>
<span class="t" style="left:1381.39px;top:496px;font-size:15.5px;line-height:17px;color:#434343;transform:scaleX(0.9683);">0.58</span>
<span class="t" style="left:1519.87px;top:496px;font-size:15.5px;line-height:17px;color:#434343;transform:scaleX(0.9766);">150</span>
<span class="t" style="left:1652.15px;top:496px;font-size:15.5px;line-height:17px;color:#434343;transform:scaleX(0.9770);">1287</span>
<span class="t" style="left:1743.7px;top:496px;font-size:15.5px;line-height:17px;color:#434343;transform:scaleX(0.9580);">Overtime</span>
<div style="left:57px;top:283px;width:1.3px;height:238px;background:#2f5d4b;"></div>
<div style="left:57px;top:520px;width:1843px;height:1px;background:#2f5d4b;"></div>
<div style="left:189px;top:521px;width:1px;height:62px;background:#e1e1e1;"></div>
<div style="left:312px;top:521px;width:1px;height:62px;background:#e1e1e1;"></div>
<div style="left:434px;top:521px;width:1px;height:62px;background:#e1e1e1;"></div>
<div style="left:562px;top:521px;width:1px;height:62px;background:#e1e1e1;"></div>
<div style="left:697px;top:521px;width:1px;height:62px;background:#e1e1e1;"></div>
<div style="left:811px;top:521px;width:1px;height:62px;background:#e1e1e1;"></div>
<div style="left:939px;top:521px;width:1px;height:62px;background:#e1e1e1;"></div>
<div style="left:1079px;top:521px;width:1px;height:62px;background:#e1e1e1;"></div>
<div style="left:1202px;top:521px;width:1px;height:62px;background:#e1e1e1;"></div>
<div style="left:1330px;top:521px;width:1px;height:62px;background:#e1e1e1;"></div>
<div style="left:1461px;top:521px;width:1px;height:62px;background:#e1e1e1;"></div>
<div style="left:1603px;top:521px;width:1px;height:62px;background:#e1e1e1;"></div>
<div style="left:1734px;top:521px;width:1px;height:62px;background:#e1e1e1;"></div>
<div style="left:1848px;top:521px;width:1px;height:62px;background:#e1e1e1;"></div>
<div style="left:57px;top:544px;width:1843px;height:1px;background:#e1e1e1;"></div>
<div style="left:57px;top:568px;width:1843px;height:1px;background:#e1e1e1;"></div>
<div style="left:1900px;top:183px;width:15px;height:94.5px;background:#f8f9fa;"></div>
<div style="left:1900px;top:282.5px;width:15px;height:301px;background:#fff;"></div>
<div style="left:1900px;top:183px;width:1px;height:400px;background:#e2e3e5;"></div>
<div style="left:1902px;top:284px;width:12px;height:33px;border-radius:6px;background:#dadce0"></div>
</main>
</body></html>
